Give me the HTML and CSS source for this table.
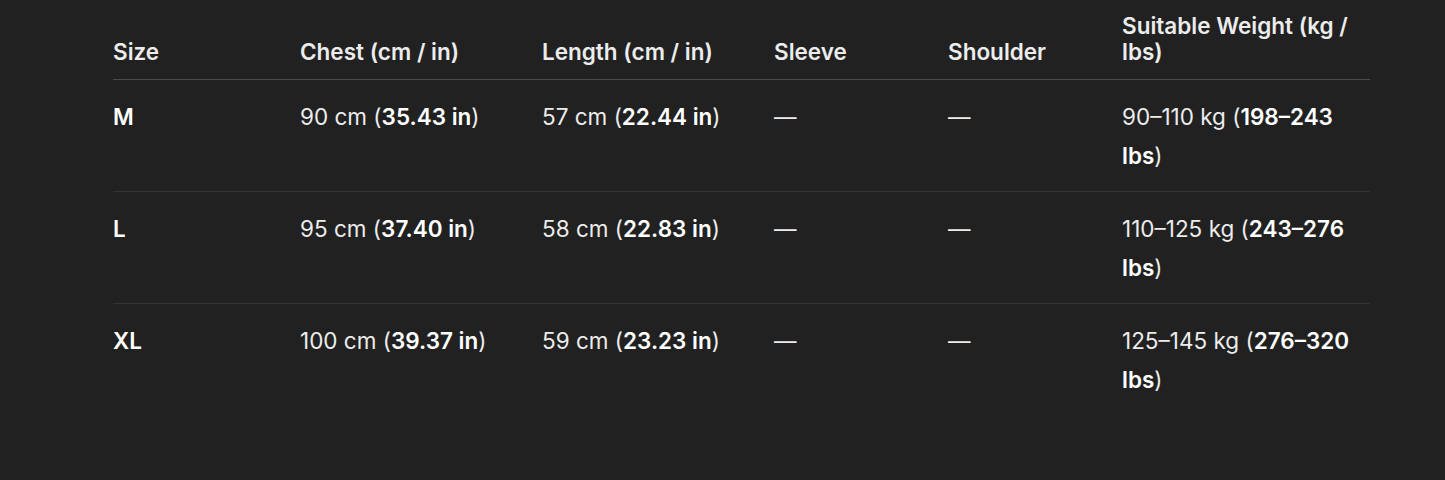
FILE: index.html
```html
<!DOCTYPE html>
<html lang="en">
<head>
  <meta charset="UTF-8" />
  <title>Size Chart</title>
  <link rel="stylesheet" href="styles.css">
</head>
<body>
  <!-- Size table -->
  <table class="koko">
    <colgroup>
      <col class="c-size">
      <col class="c-chest">
      <col class="c-length">
      <col class="c-sleeve">
      <col class="c-shoulder">
      <col class="c-weight">
    </colgroup>
    <thead>
      <tr>
        <th>Size</th>
        <th>Chest (cm / in)</th>
        <th>Length (cm / in)</th>
        <th>Sleeve</th>
        <th>Shoulder</th>
        <th>Suitable Weight (kg / lbs)</th>
      </tr>
    </thead>
    <tbody>
      <tr>
        <td><b>M</b></td>
        <td>90 cm (<b>35.43 in</b>)</td>
        <td>57 cm (<b>22.44 in</b>)</td>
        <td>—</td>
        <td>—</td>
        <td>90–110 kg (<b>198–243 lbs</b>)</td>
      </tr>
      <tr>
        <td><b>L</b></td>
        <td>95 cm (<b>37.40 in</b>)</td>
        <td>58 cm (<b>22.83 in</b>)</td>
        <td>—</td>
        <td>—</td>
        <td>110–125 kg (<b>243–276 lbs</b>)</td>
      </tr>
      <tr>
        <td><b>XL</b></td>
        <td>100 cm (<b>39.37 in</b>)</td>
        <td>59 cm (<b>23.23 in</b>)</td>
        <td>—</td>
        <td>—</td>
        <td>125–145 kg (<b>276–320 lbs</b>)</td>
      </tr>
    </tbody>
  </table>
</body>
</html>
```

FILE: styles.css
```css
html, body {
  margin: 0;
  padding: 0;
  background: #212121;
  color: #ececec;
  font-family: 'Inter', 'Noto Sans', sans-serif;
}

body {
  padding: 3px 0 0 113px;
}

.koko {
  width: 1257px;
  table-layout: fixed;
  border-collapse: collapse;
  font-size: 22.5px;
}

.c-size { width: 187px; }
.c-chest { width: 242px; }
.c-length { width: 232px; }
.c-sleeve { width: 174px; }
.c-shoulder { width: 174px; }
.c-weight { width: 248px; }

th {
  text-align: left;
  vertical-align: bottom;
  font-weight: 600;
  line-height: 26px;
  padding: 10px 10px 14px 0;
  border-bottom: 1px solid #4a4a4a;
}

td {
  text-align: left;
  vertical-align: top;
  line-height: 39px;
  padding: 17px 10px 16px 0;
  border-bottom: 1px solid #333333;
}

tbody tr:last-child td {
  border-bottom: none;
}

b {
  font-weight: 600;
  color: #fff;
}
```
